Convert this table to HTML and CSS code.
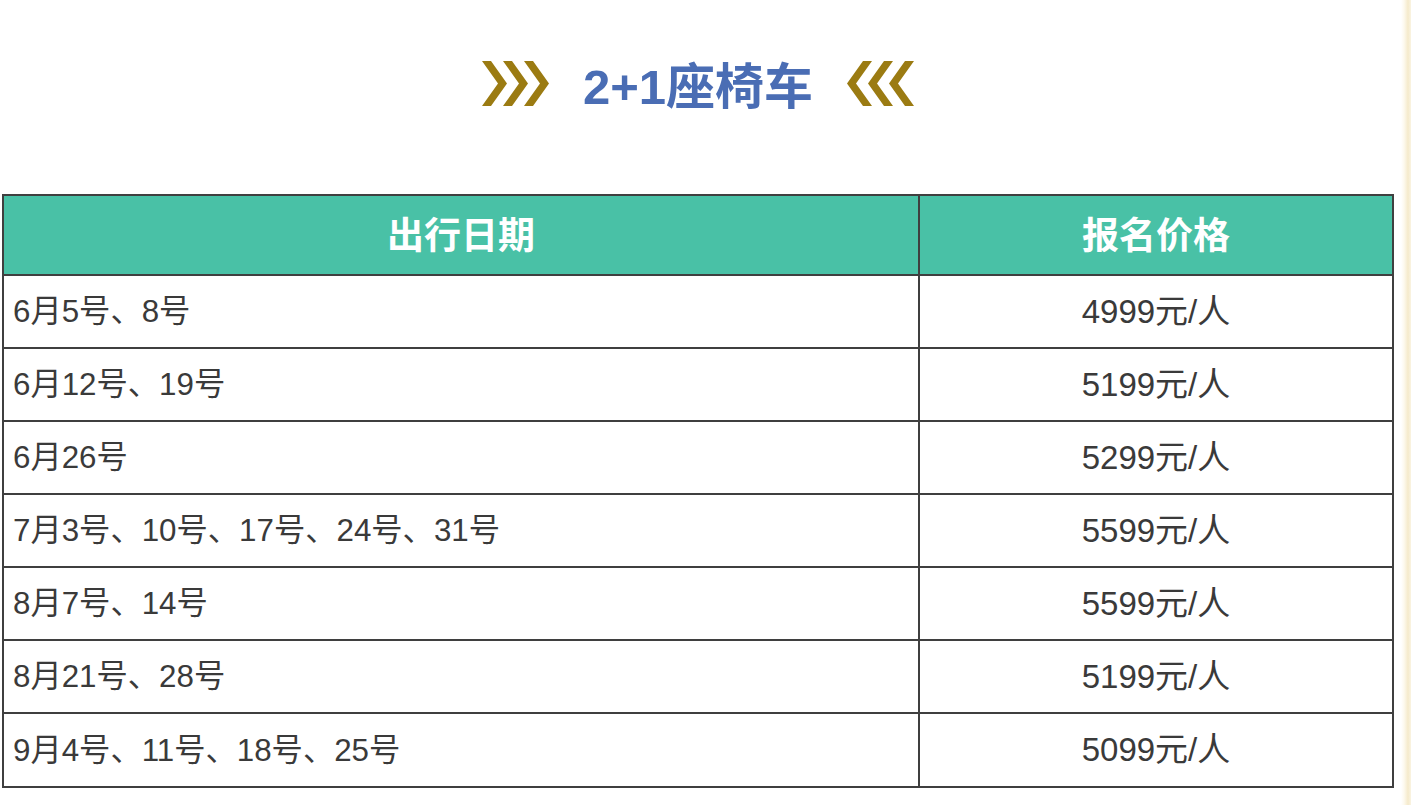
FILE: index.html
```html
<!DOCTYPE html>
<html lang="zh-CN">
<head>
<meta charset="utf-8">
<title>2+1座椅车</title>
<link rel="stylesheet" href="styles.css">
</head>
<body>
<div class="wrap">
  <header class="title-bar">
    <svg class="chev" width="67" height="45" viewBox="0 0 67 45" aria-hidden="true">
      <polygon points="0,0 9,0 25,22.5 9,45 0,45 16,22.5"/>
      <polygon points="21,0 30,0 46,22.5 30,45 21,45 37,22.5"/>
      <polygon points="42,0 51,0 67,22.5 51,45 42,45 58,22.5"/>
    </svg>
    <h1 class="title">2+1座椅车</h1>
    <svg class="chev" width="67" height="45" viewBox="0 0 67 45" aria-hidden="true">
      <polygon points="67,0 58,0 42,22.5 58,45 67,45 51,22.5"/>
      <polygon points="46,0 37,0 21,22.5 37,45 46,45 30,22.5"/>
      <polygon points="25,0 16,0 0,22.5 16,45 25,45 9,22.5"/>
    </svg>
  </header>
  <table class="price-table">
    <colgroup>
      <col class="col-date">
      <col class="col-price">
    </colgroup>
    <thead>
      <tr><th>出行日期</th><th>报名价格</th></tr>
    </thead>
    <tbody>
      <tr><td class="date">6月5号、8号</td><td class="price">4999元/人</td></tr>
      <tr><td class="date">6月12号、19号</td><td class="price">5199元/人</td></tr>
      <tr><td class="date">6月26号</td><td class="price">5299元/人</td></tr>
      <tr><td class="date">7月3号、10号、17号、24号、31号</td><td class="price">5599元/人</td></tr>
      <tr><td class="date">8月7号、14号</td><td class="price">5599元/人</td></tr>
      <tr><td class="date">8月21号、28号</td><td class="price">5199元/人</td></tr>
      <tr><td class="date">9月4号、11号、18号、25号</td><td class="price">5099元/人</td></tr>
    </tbody>
  </table>
</div>
</body>
</html>
```

FILE: styles.css
```css
html, body {
  margin: 0;
  padding: 0;
}
body {
  min-height: 805px;
  background: linear-gradient(to right, #ffffff 0, #ffffff 1401px, #fdf9ee 1404px, #f5eacb 1408px, #faf4e2 1411px);
  font-family: "Liberation Sans", "Noto Sans CJK SC", sans-serif;
  color: #3a3a3a;
}
.wrap {
  width: 1396px;
  background: #fff;
  padding-bottom: 17px;
}
.title-bar {
  height: 170px;
  display: flex;
  align-items: center;
  justify-content: center;
  gap: 34px;
}
.chev {
  fill: #9b7b12;
  display: block;
  margin-top: -4px;
}
.title {
  margin: 4px 0 0 0;
  font-family: "Liberation Sans", "Noto Sans CJK SC", sans-serif;
  font-weight: bold;
  font-size: 49px;
  line-height: 1;
  color: #4a6db4;
}
.price-table {
  margin: 24px 0 0 2px;
  width: 1392px;
  table-layout: fixed;
  border-collapse: separate;
  border-spacing: 2px;
  background: #3f3f3f;
}
.col-date { width: 914px; }
.col-price { width: 472px; }
.price-table th {
  background: #49c1a6;
  color: #ffffff;
  font-family: "Liberation Sans", "Noto Sans CJK SC", sans-serif;
  font-weight: bold;
  font-size: 37px;
  height: 73px;
  padding: 0 0 5px 0;
  text-align: center;
  vertical-align: middle;
}
.price-table td {
  background: #ffffff;
  height: 65px;
  padding: 0 0 6px 0;
  vertical-align: middle;
  white-space: nowrap;
}
.price-table tbody tr:last-child td {
  height: 66px;
}
.price-table td.date {
  text-align: left;
  padding-left: 9px;
  font-size: 31.3px;
}
.price-table td.price {
  text-align: center;
  font-size: 33px;
}
```
